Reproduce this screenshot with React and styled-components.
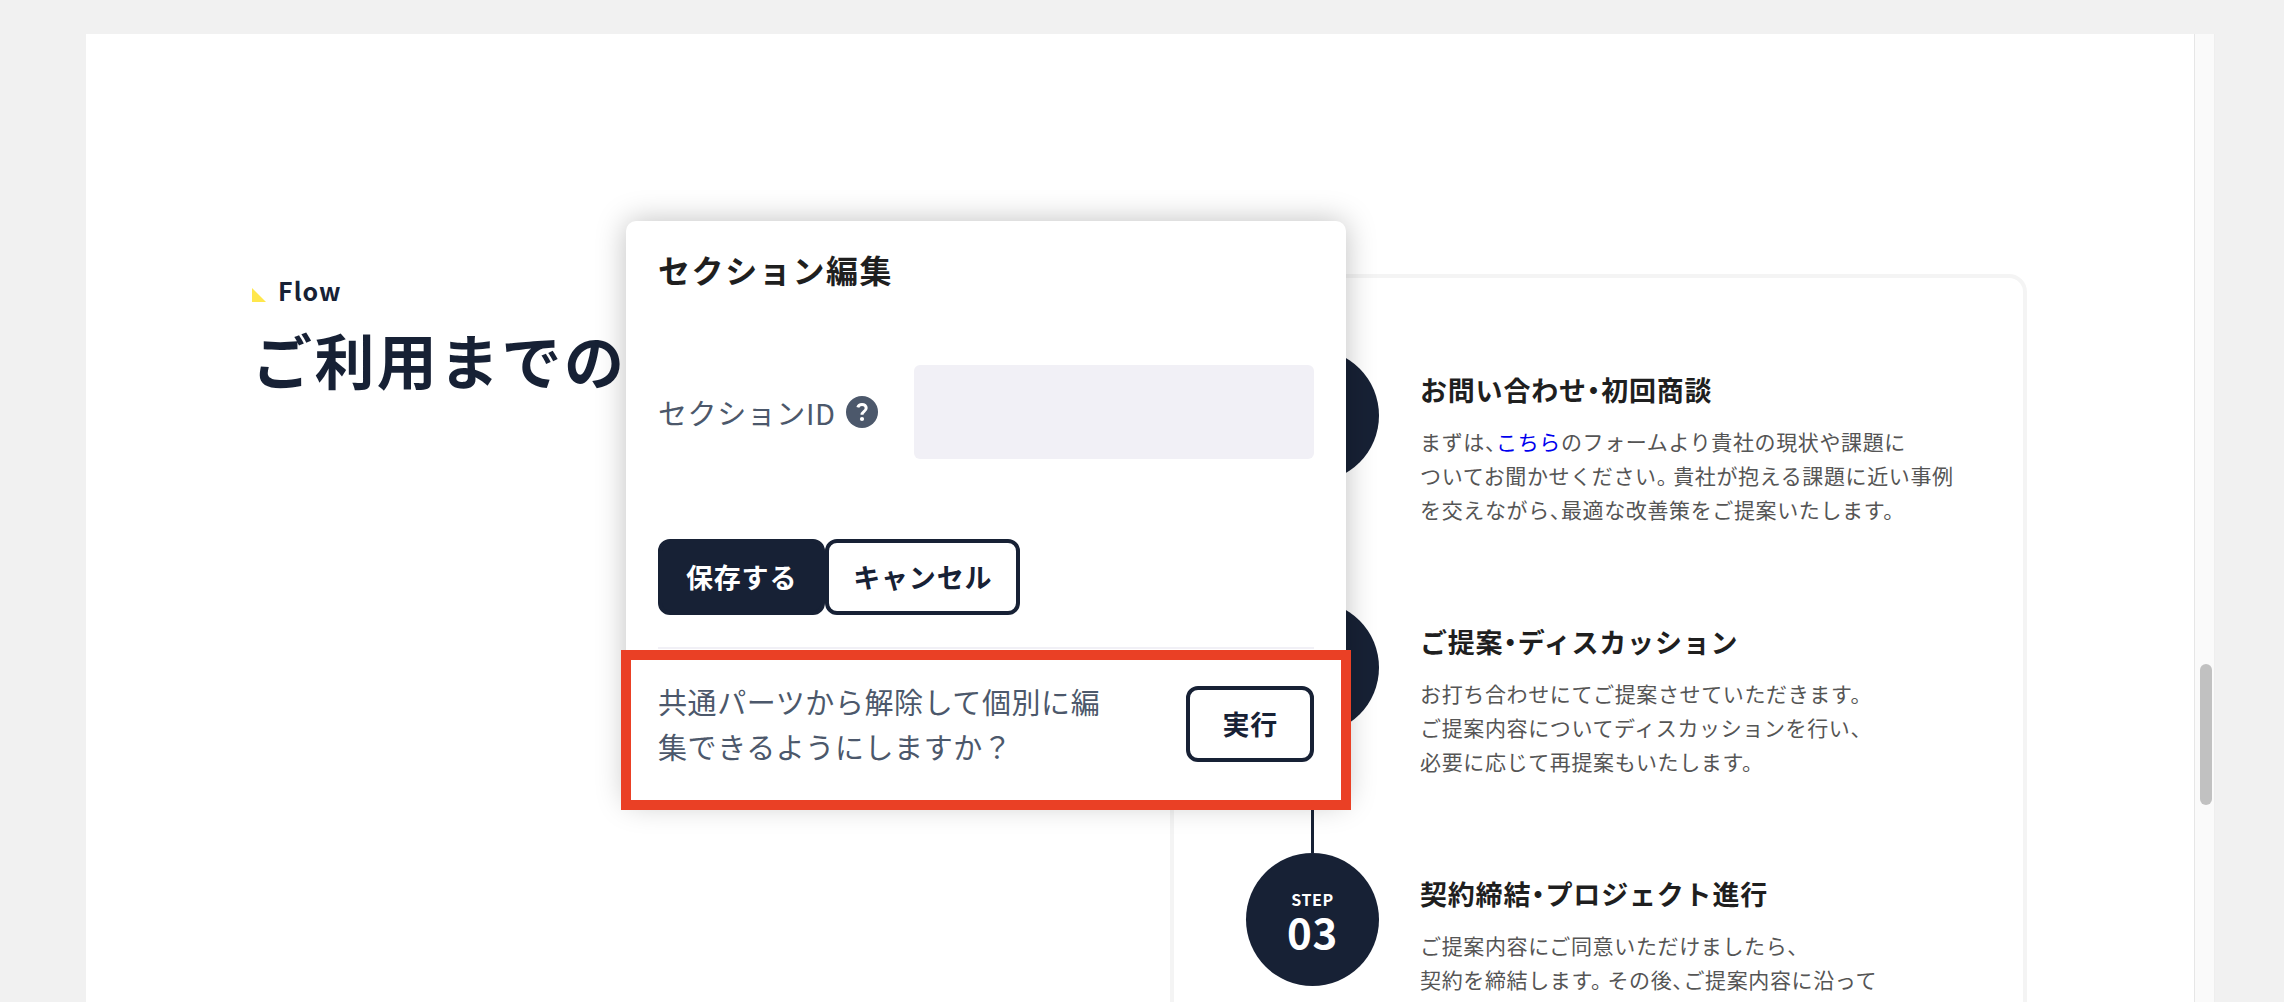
import React, { useState } from "react";
import styled, { createGlobalStyle } from "styled-components";

const navy = "#172135";
const slate = "#4c586b";

const TextLink = styled.a`
  color: #0000ee;
  text-decoration: none;
`;

const steps = [
  {
    no: "01",
    title: "お問い合わせ・初回商談",
    body: (
      <>
        まずは、<TextLink href="#contact">こちら</TextLink>
        のフォームより貴社の現状や課題に
        <br />
        ついてお聞かせください。 貴社が抱える課題に近い事例
        <br />
        を交えながら、最適な改善策をご提案いたします。
      </>
    ),
  },
  {
    no: "02",
    title: "ご提案・ディスカッション",
    body: (
      <>
        お打ち合わせにてご提案させていただきます。
        <br />
        ご提案内容についてディスカッションを行い、
        <br />
        必要に応じて再提案もいたします。
      </>
    ),
  },
  {
    no: "03",
    title: "契約締結・プロジェクト進行",
    body: (
      <>
        ご提案内容にご同意いただけましたら、
        <br />
        契約を締結します。 その後、ご提案内容に沿って
      </>
    ),
  },
];

function HelpIcon() {
  return (
    <svg width="32" height="32" viewBox="0 0 32 32" aria-hidden="true">
      <circle cx="16" cy="16" r="16" fill={slate} />
      <path
        d="M11.8 11.4C12.4 9.4 14 8.4 16 8.4c2.5 0 4.2 1.5 4.2 3.6 0 1.7-1 2.6-2.3 3.6-1.2.9-1.9 1.6-1.9 3.2"
        fill="none"
        stroke="#ffffff"
        strokeWidth="3"
        strokeLinejoin="round"
      />
      <circle cx="16" cy="23" r="2.1" fill="#ffffff" />
    </svg>
  );
}

function Step({ step, isLast }) {
  return (
    <StepItem>
      <Rail>
        <Circle>
          <CircleLabel>STEP</CircleLabel>
          <CircleNumber>{step.no}</CircleNumber>
        </Circle>
        {!isLast && <Connector />}
      </Rail>
      <StepContent>
        <StepTitle>{step.title}</StepTitle>
        <StepText>{step.body}</StepText>
      </StepContent>
    </StepItem>
  );
}

function SectionDialog() {
  const [sectionId, setSectionId] = useState("");

  return (
    <Dialog role="dialog" aria-labelledby="dialog-title">
      <DialogTitle id="dialog-title">セクション編集</DialogTitle>
      <Field>
        <FieldLabel htmlFor="section-id">
          セクションID
          <HelpIcon />
        </FieldLabel>
        <FieldInput
          id="section-id"
          type="text"
          value={sectionId}
          onChange={(e) => setSectionId(e.target.value)}
        />
      </Field>
      <Actions>
        <Button type="button" $primary>
          保存する
        </Button>
        <Button type="button">キャンセル</Button>
      </Actions>
      <Release>
        <ReleaseText>
          共通パーツから解除して個別に編集できるようにしますか？
        </ReleaseText>
        <Button type="button" $wide>
          実行
        </Button>
        <Highlight />
      </Release>
    </Dialog>
  );
}

export default function App() {
  return (
    <Page>
      <GlobalStyle />
      <Preview>
        <Section>
          <Heading>
            <Eyebrow>
              <Corner />
              Flow
            </Eyebrow>
            <Title>ご利用までの</Title>
          </Heading>
          <Card>
            {steps.map((step, idx) => (
              <Step
                key={step.no}
                step={step}
                isLast={idx === steps.length - 1}
              />
            ))}
          </Card>
        </Section>
        <SectionDialog />
      </Preview>
      <ScrollTrack>
        <ScrollThumb />
      </ScrollTrack>
    </Page>
  );
}

const GlobalStyle = createGlobalStyle`
  * {
    box-sizing: border-box;
  }
  body {
    margin: 0;
    background: #f1f1f1;
    font-family: "Noto Sans CJK JP", sans-serif;
  }
  h1, h2, h3, p, ol {
    margin: 0;
    padding: 0;
  }
`;

const Page = styled.div`
  display: flex;
  height: 100vh;
  padding: 34px 69px 0 86px;
  overflow: hidden;
`;

const Preview = styled.main`
  position: relative;
  flex: 1;
  background: #ffffff;
`;

const Section = styled.section`
  display: flex;
  justify-content: space-between;
  padding: 240px 167px 0 166px;
`;

const Heading = styled.header`
  color: ${navy};
`;

const Eyebrow = styled.p`
  display: flex;
  align-items: center;
  gap: 12px;
  font-size: 25px;
  line-height: 32px;
  font-weight: 600;
  letter-spacing: 0.04em;
`;

const Corner = styled.span`
  width: 14px;
  height: 14px;
  margin-top: 10px;
  background: #ffe74c;
  clip-path: polygon(0 0, 100% 100%, 0 100%);
`;

const Title = styled.h1`
  margin-top: 17px;
  font-size: 60px;
  line-height: 72px;
  font-weight: 600;
  letter-spacing: 0.04em;
`;

const Card = styled.ol`
  width: 857px;
  padding: 71px 71px 0 72px;
  border: 4px solid #f4f4f4;
  border-radius: 18px;
  list-style: none;
`;

const StepItem = styled.li`
  display: flex;
  gap: 41px;
`;

const Rail = styled.div`
  display: flex;
  flex-direction: column;
  align-items: center;
`;

const Circle = styled.div`
  display: flex;
  flex-direction: column;
  align-items: center;
  justify-content: center;
  width: 133px;
  height: 133px;
  border-radius: 50%;
  background: ${navy};
  color: #ffffff;
  font-weight: 600;
  letter-spacing: 0.04em;
`;

const CircleLabel = styled.span`
  font-size: 16px;
  line-height: 22px;
`;

const CircleNumber = styled.span`
  font-size: 42px;
  line-height: 42px;
`;

const Connector = styled.div`
  flex: 1;
  width: 3px;
  background: ${navy};
`;

const StepContent = styled.div`
  flex: 1;
  padding: 22px 0 75px;
  font-feature-settings: "halt" 1;
`;

const StepTitle = styled.h2`
  color: #1f1f1f;
  font-size: 27px;
  line-height: 38px;
  font-weight: 600;
  letter-spacing: 0.03em;
`;

const StepText = styled.p`
  margin-top: 15px;
  color: #555555;
  font-size: 21px;
  line-height: 34px;
  letter-spacing: 0.03em;
  white-space: nowrap;
`;

const Dialog = styled.div`
  position: absolute;
  top: 187px;
  left: 540px;
  width: 720px;
  padding: 26px 32px 34px;
  border-radius: 10px;
  background: #ffffff;
  box-shadow: 0 0 30px rgba(0, 0, 0, 0.25);
`;

const DialogTitle = styled.h2`
  color: #1f1f1f;
  font-size: 32px;
  line-height: 44px;
  font-weight: 700;
  letter-spacing: 0.05em;
`;

const Field = styled.div`
  display: flex;
  align-items: center;
  justify-content: space-between;
  margin-top: 74px;
`;

const FieldLabel = styled.label`
  display: flex;
  align-items: center;
  gap: 10px;
  color: ${slate};
  font-size: 29px;
  line-height: 45px;
  letter-spacing: 0.02em;
`;

const FieldInput = styled.input`
  width: 400px;
  height: 94px;
  padding: 0 24px;
  border: 0;
  border-radius: 6px;
  background: #f1f0f6;
  color: ${slate};
  font: inherit;
  font-size: 29px;
`;

const Actions = styled.div`
  display: flex;
  margin-top: 80px;
  padding-bottom: 32px;
  border-bottom: 2px solid #f1f0f6;
`;

const Button = styled.button`
  flex: none;
  height: 76px;
  padding: 0 ${(props) => (props.$wide ? 32 : 24)}px 2px;
  border: 4px solid ${navy};
  border-radius: 12px;
  background: ${(props) => (props.$primary ? navy : "#ffffff")};
  color: ${(props) => (props.$primary ? "#ffffff" : navy)};
  font-family: inherit;
  font-size: 27px;
  font-weight: 700;
  letter-spacing: 0.03em;
  cursor: pointer;
`;

const Release = styled.div`
  position: relative;
  display: flex;
  align-items: center;
  gap: 64px;
  margin-top: 30px;
`;

const ReleaseText = styled.p`
  flex: 1;
  color: ${slate};
  font-size: 29px;
  line-height: 45px;
  letter-spacing: 0.02em;
`;

/* 解除エリアを囲む赤枠 */
const Highlight = styled.div`
  position: absolute;
  inset: -29px -37px -41px;
  border: 10px solid #ea4025;
  pointer-events: none;
`;

const ScrollTrack = styled.div`
  width: 21px;
  padding: 630px 0 0 5px;
  border: solid #e6e6e6;
  border-width: 0 1px;
  border-right-color: #eeeeee;
  background: #fafafa;
`;

const ScrollThumb = styled.div`
  width: 12px;
  height: 141px;
  border-radius: 6px;
  background: #c1c1c1;
`;
